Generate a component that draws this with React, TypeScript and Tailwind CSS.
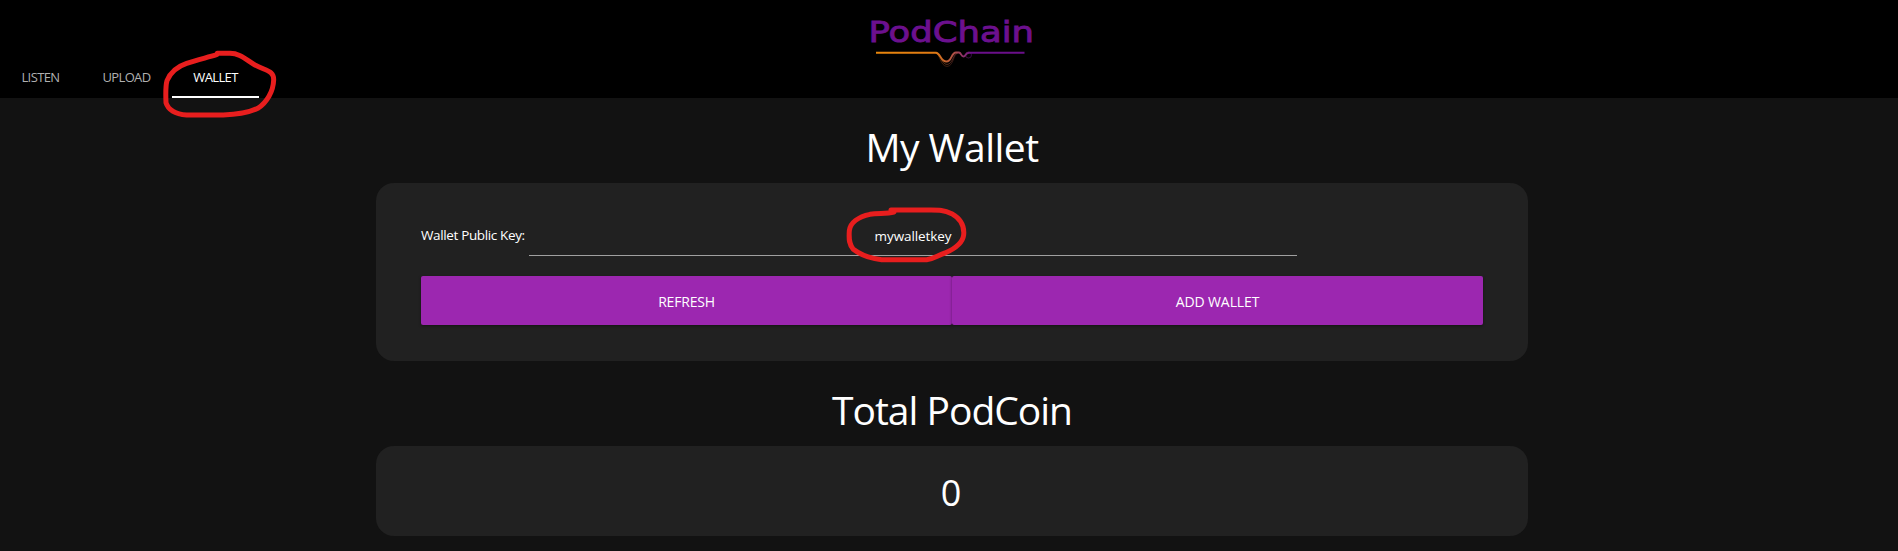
import React from "react";

const tabs = [
  { label: "LISTEN", box: "w-[81px] text-[#b0b0b0]", text: "tracking-[-0.6px]" },
  { label: "UPLOAD", box: "w-[91px] text-[#b0b0b0]", text: "tracking-[-0.65px]" },
  { label: "WALLET", box: "w-[87px] text-white border-b-2 border-white", text: "tracking-[-0.65px]" },
];

function Logo() {
  return (
    <svg className="mx-auto block h-[72px] w-[200px]" viewBox="0 0 200 72" fill="none">
      <defs>
        <linearGradient id="wave" gradientUnits="userSpaceOnUse" x1="26" y1="0" x2="175" y2="0">
          <stop offset="0" stopColor="#e8860c" />
          <stop offset="0.4" stopColor="#e07a14" />
          <stop offset="0.54" stopColor="#a84a4e" />
          <stop offset="0.64" stopColor="#6a0f8a" />
          <stop offset="1" stopColor="#6a0f8a" />
        </linearGradient>
      </defs>
      <text
        x="18.500"
        y="42.400"
        textLength="165.500"
        lengthAdjust="spacingAndGlyphs"
        className="fill-[#6c108e] stroke-[#6c108e] font-['DejaVu_Sans'] text-[29px]"
        strokeWidth="0.9"
      >
        PodChain
      </text>
      <g stroke="url(#wave)">
        <path d="M85 53C90 53 90 66 97 66.500C104 66 103 54 108 53" strokeWidth="0.7" opacity="0.4" />
        <path d="M86 53C91 54 91 64 97 64.500C103 64 103 54 107 53" strokeWidth="0.7" opacity="0.6" />
        <circle cx="118.500" cy="55" r="3" strokeWidth="0.7" opacity="0.7" />
        <path
          d="M26 52.800H86C90.500 53 90.500 61.500 96.500 61.500C102 61.500 101 52.500 106 52.500H109C111.500 53 111 56.500 113.500 56.500C116 56.500 115 52.800 119 52.800H174.500"
          strokeWidth="1.9"
        />
      </g>
    </svg>
  );
}

function Annotations() {
  return (
    <svg
      className="pointer-events-none absolute left-0 top-0 h-[551px] w-[1898px]"
      viewBox="0 0 1898 551"
      fill="none"
      stroke="#e81e1e"
      strokeLinecap="round"
      strokeLinejoin="round"
    >
      <g transform="translate(0 40) scale(0.33333)">
        <path
          strokeWidth="15"
          d="M650 44C620 53 590 60 560 70C530 80 510 100 501 122C496 140 497 165 498 188C505 210 525 222 560 225H670C710 224 750 217 775 204C800 187 820 155 821 120C822 92 800 93 765 75C735 57 720 40 690 40H652"
        />
      </g>
      <g transform="translate(820 110) scale(0.33333)">
        <path
          strokeWidth="15"
          d="M222 306C200 312 175 309 150 313C115 320 90 338 88 362C86 390 88 405 100 418C125 437 155 446 185 449H320C345 446 350 437 375 429C405 416 428 400 431 375C434 345 420 325 395 311C370 299 355 300 325 300H213"
        />
      </g>
    </svg>
  );
}

export default function App() {
  return (
    <div className="relative h-[551px] overflow-hidden bg-[#121212] font-['Open_Sans','Noto_Sans',sans-serif] text-white">
      <header className="flex h-[98px] flex-col bg-black">
        <div className="h-[58px] pl-[2px]">
          <Logo />
        </div>
        <nav className="flex h-10">
          {tabs.map((t) => (
            <button key={t.label} className={`flex h-10 justify-center pt-[10px] text-[13px] leading-[18px] ${t.box}`}>
              <span className={t.text}>{t.label}</span>
            </button>
          ))}
        </nav>
      </header>

      <main className="ml-[376px] w-[1152px] text-center">
        <h1 className="h-[85px] pt-[21px] text-[39px] leading-[56px] tracking-[-0.55px]">My Wallet</h1>
        <section className="h-[178px] rounded-[18px] bg-[#212121] px-[45px] pt-[37px]">
          <div className="flex h-9">
            <label className="w-[108px] whitespace-nowrap pt-[6px] text-left text-[13.500px] font-medium leading-[18px] tracking-[-0.36px]">
              Wallet Public Key:
            </label>
            <input
              className="h-9 w-[768px] border-b border-[#a0a0a0] bg-transparent pb-[3px] text-center text-[13.500px] font-medium tracking-[-0.1px] outline-none"
              defaultValue="mywalletkey"
            />
          </div>
          <div className="mt-5 flex h-[49px] text-[14px]">
            <button className="flex-1 rounded-[2px] bg-[#9c27b0] pt-px tracking-[-0.2px] shadow-[0_1px_3px_rgba(0,0,0,0.4)]">
              REFRESH
            </button>
            <button className="flex-1 rounded-[2px] bg-[#9c27b0] pt-px tracking-[-0.1px] shadow-[0_1px_3px_rgba(0,0,0,0.4)]">
              ADD WALLET
            </button>
          </div>
        </section>
        <h1 className="h-[85px] pt-[21px] text-[39px] leading-[56px] tracking-[-1px]">Total PodCoin</h1>
        <section className="h-[90px] rounded-[18px] bg-[#212121] pr-[2px] pt-[22px] text-[36px] leading-[50px]">0</section>
      </main>

      <Annotations />
    </div>
  );
}
